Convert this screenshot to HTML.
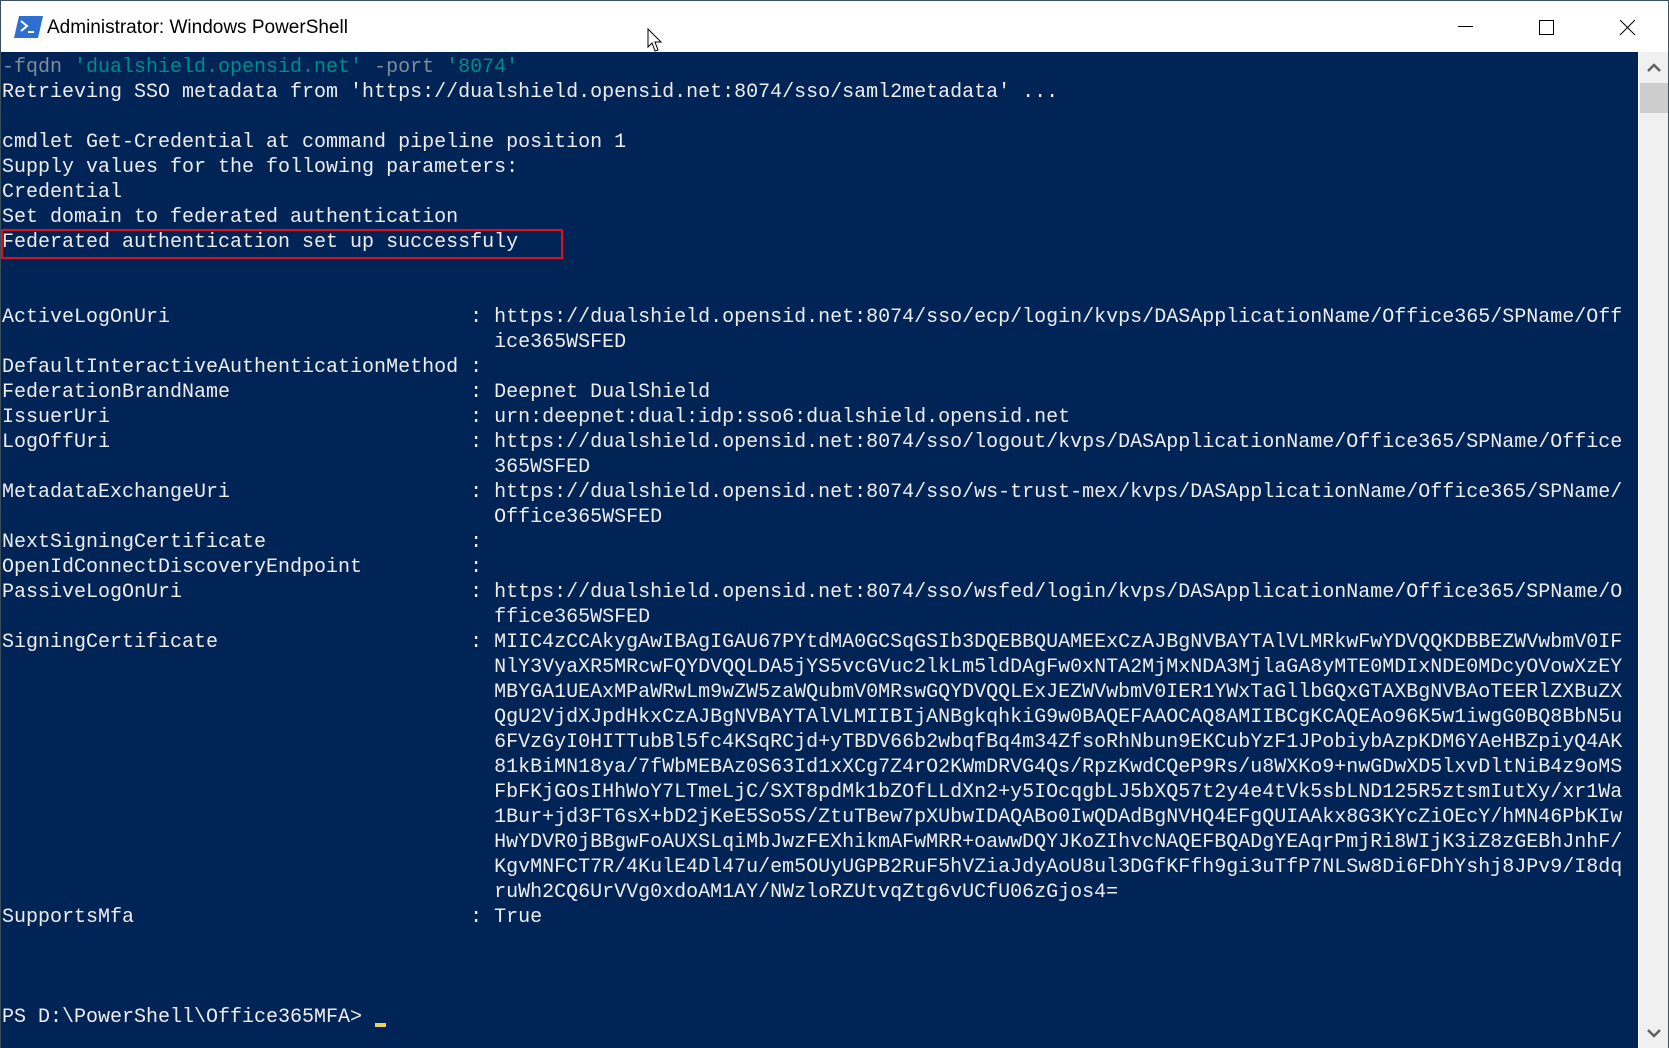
<!DOCTYPE html>
<html><head><meta charset="utf-8"><style>
html,body{margin:0;padding:0;width:1669px;height:1048px;overflow:hidden;background:#fff}
.win{position:absolute;left:0;top:0;width:1667px;height:1047px;border:1px solid #3c4f5e;border-bottom:none;background:#fff}
.title{position:absolute;left:46px;top:16px;font:19px "Liberation Sans",sans-serif;color:#000}
.con{position:absolute;left:0;top:51px;width:1637px;height:996px;background:#012456;overflow:hidden}
pre{margin:0;position:absolute;left:1px;top:3px;font:20px/25px "Liberation Mono",monospace;color:#eeedf0;white-space:pre}
.g{color:#7f8c99}.t{color:#008b8b}
.sb{position:absolute;left:1638px;top:51px;width:29px;height:996px;background:#f0f0f0}
.red{position:absolute;left:0;top:228px;width:562px;height:30px;border:2px solid #e0101a;box-sizing:border-box}
.cur{position:absolute;left:374px;top:1022px;width:11px;height:4px;background:#f0d060}
</style></head><body>
<div class="win">
<svg style="position:absolute;left:13px;top:15px" width="29" height="22" viewBox="0 0 29 22"><polygon points="5,0 29,0 24,22 0,22" fill="#2f6fd0"/><polyline points="7,5 13,10 7,15" fill="none" stroke="#fff" stroke-width="2"/><line x1="14" y1="16" x2="20" y2="16" stroke="#fff" stroke-width="2"/></svg>
<div class="title">Administrator: Windows PowerShell</div>
<svg style="position:absolute;left:1452px;top:17px" width="190" height="20"><line x1="5" y1="8.5" x2="20" y2="8.5" stroke="#000"/><rect x="86.5" y="2.5" width="14" height="14" fill="none" stroke="#000"/><path d="M167 2 L182 17 M182 2 L167 17" stroke="#000"/></svg>
<svg style="position:absolute;left:646px;top:27px" width="20" height="28"><path d="M1 1 L1 19 L5 15 L8 23 L11 22 L8 14 L14 14 Z" fill="#fff" stroke="#000"/></svg>
<div class="con"><pre><span class="g">-fqdn </span><span class="t">'dualshield.opensid.net'</span><span class="g"> -port </span><span class="t">'8074'</span>
Retrieving SSO metadata from 'https://dualshield.opensid.net:8074/sso/saml2metadata' ...

cmdlet Get-Credential at command pipeline position 1
Supply values for the following parameters:
Credential
Set domain to federated authentication
Federated authentication set up successfuly


ActiveLogOnUri                         : https://dualshield.opensid.net:8074/sso/ecp/login/kvps/DASApplicationName/Office365/SPName/Off
                                         ice365WSFED
DefaultInteractiveAuthenticationMethod :
FederationBrandName                    : Deepnet DualShield
IssuerUri                              : urn:deepnet:dual:idp:sso6:dualshield.opensid.net
LogOffUri                              : https://dualshield.opensid.net:8074/sso/logout/kvps/DASApplicationName/Office365/SPName/Office
                                         365WSFED
MetadataExchangeUri                    : https://dualshield.opensid.net:8074/sso/ws-trust-mex/kvps/DASApplicationName/Office365/SPName/
                                         Office365WSFED
NextSigningCertificate                 :
OpenIdConnectDiscoveryEndpoint         :
PassiveLogOnUri                        : https://dualshield.opensid.net:8074/sso/wsfed/login/kvps/DASApplicationName/Office365/SPName/O
                                         ffice365WSFED
SigningCertificate                     : MIIC4zCCAkygAwIBAgIGAU67PYtdMA0GCSqGSIb3DQEBBQUAMEExCzAJBgNVBAYTAlVLMRkwFwYDVQQKDBBEZWVwbmV0IF
                                         NlY3VyaXR5MRcwFQYDVQQLDA5jYS5vcGVuc2lkLm5ldDAgFw0xNTA2MjMxNDA3MjlaGA8yMTE0MDIxNDE0MDcyOVowXzEY
                                         MBYGA1UEAxMPaWRwLm9wZW5zaWQubmV0MRswGQYDVQQLExJEZWVwbmV0IER1YWxTaGllbGQxGTAXBgNVBAoTEERlZXBuZX
                                         QgU2VjdXJpdHkxCzAJBgNVBAYTAlVLMIIBIjANBgkqhkiG9w0BAQEFAAOCAQ8AMIIBCgKCAQEAo96K5w1iwgG0BQ8BbN5u
                                         6FVzGyI0HITTubBl5fc4KSqRCjd+yTBDV66b2wbqfBq4m34ZfsoRhNbun9EKCubYzF1JPobiybAzpKDM6YAeHBZpiyQ4AK
                                         81kBiMN18ya/7fWbMEBAz0S63Id1xXCg7Z4rO2KWmDRVG4Qs/RpzKwdCQeP9Rs/u8WXKo9+nwGDwXD5lxvDltNiB4z9oMS
                                         FbFKjGOsIHhWoY7LTmeLjC/SXT8pdMk1bZOfLLdXn2+y5IOcqgbLJ5bXQ57t2y4e4tVk5sbLND125R5ztsmIutXy/xr1Wa
                                         1Bur+jd3FT6sX+bD2jKeE5So5S/ZtuTBew7pXUbwIDAQABo0IwQDAdBgNVHQ4EFgQUIAAkx8G3KYcZiOEcY/hMN46PbKIw
                                         HwYDVR0jBBgwFoAUXSLqiMbJwzFEXhikmAFwMRR+oawwDQYJKoZIhvcNAQEFBQADgYEAqrPmjRi8WIjK3iZ8zGEBhJnhF/
                                         KgvMNFCT7R/4KulE4Dl47u/em5OUyUGPB2RuF5hVZiaJdyAoU8ul3DGfKFfh9gi3uTfP7NLSw8Di6FDhYshj8JPv9/I8dq
                                         ruWh2CQ6UrVVg0xdoAM1AY/NWzloRZUtvqZtg6vUCfU06zGjos4=
SupportsMfa                            : True



PS D:\PowerShell\Office365MFA&gt; </pre></div>
<div class="red"></div>
<div class="cur"></div>
<div class="sb">
<svg style="position:absolute;left:8px;top:11px" width="14" height="10"><polyline points="1,8 7,2 13,8" fill="none" stroke="#606060" stroke-width="2.5"/></svg>
<div style="position:absolute;left:1px;top:31px;width:28px;height:30px;background:#cdcdcd"></div>
<svg style="position:absolute;left:8px;top:976px" width="14" height="10"><polyline points="1,2 7,8 13,2" fill="none" stroke="#606060" stroke-width="2.5"/></svg>
</div>
</div>
</body></html>
